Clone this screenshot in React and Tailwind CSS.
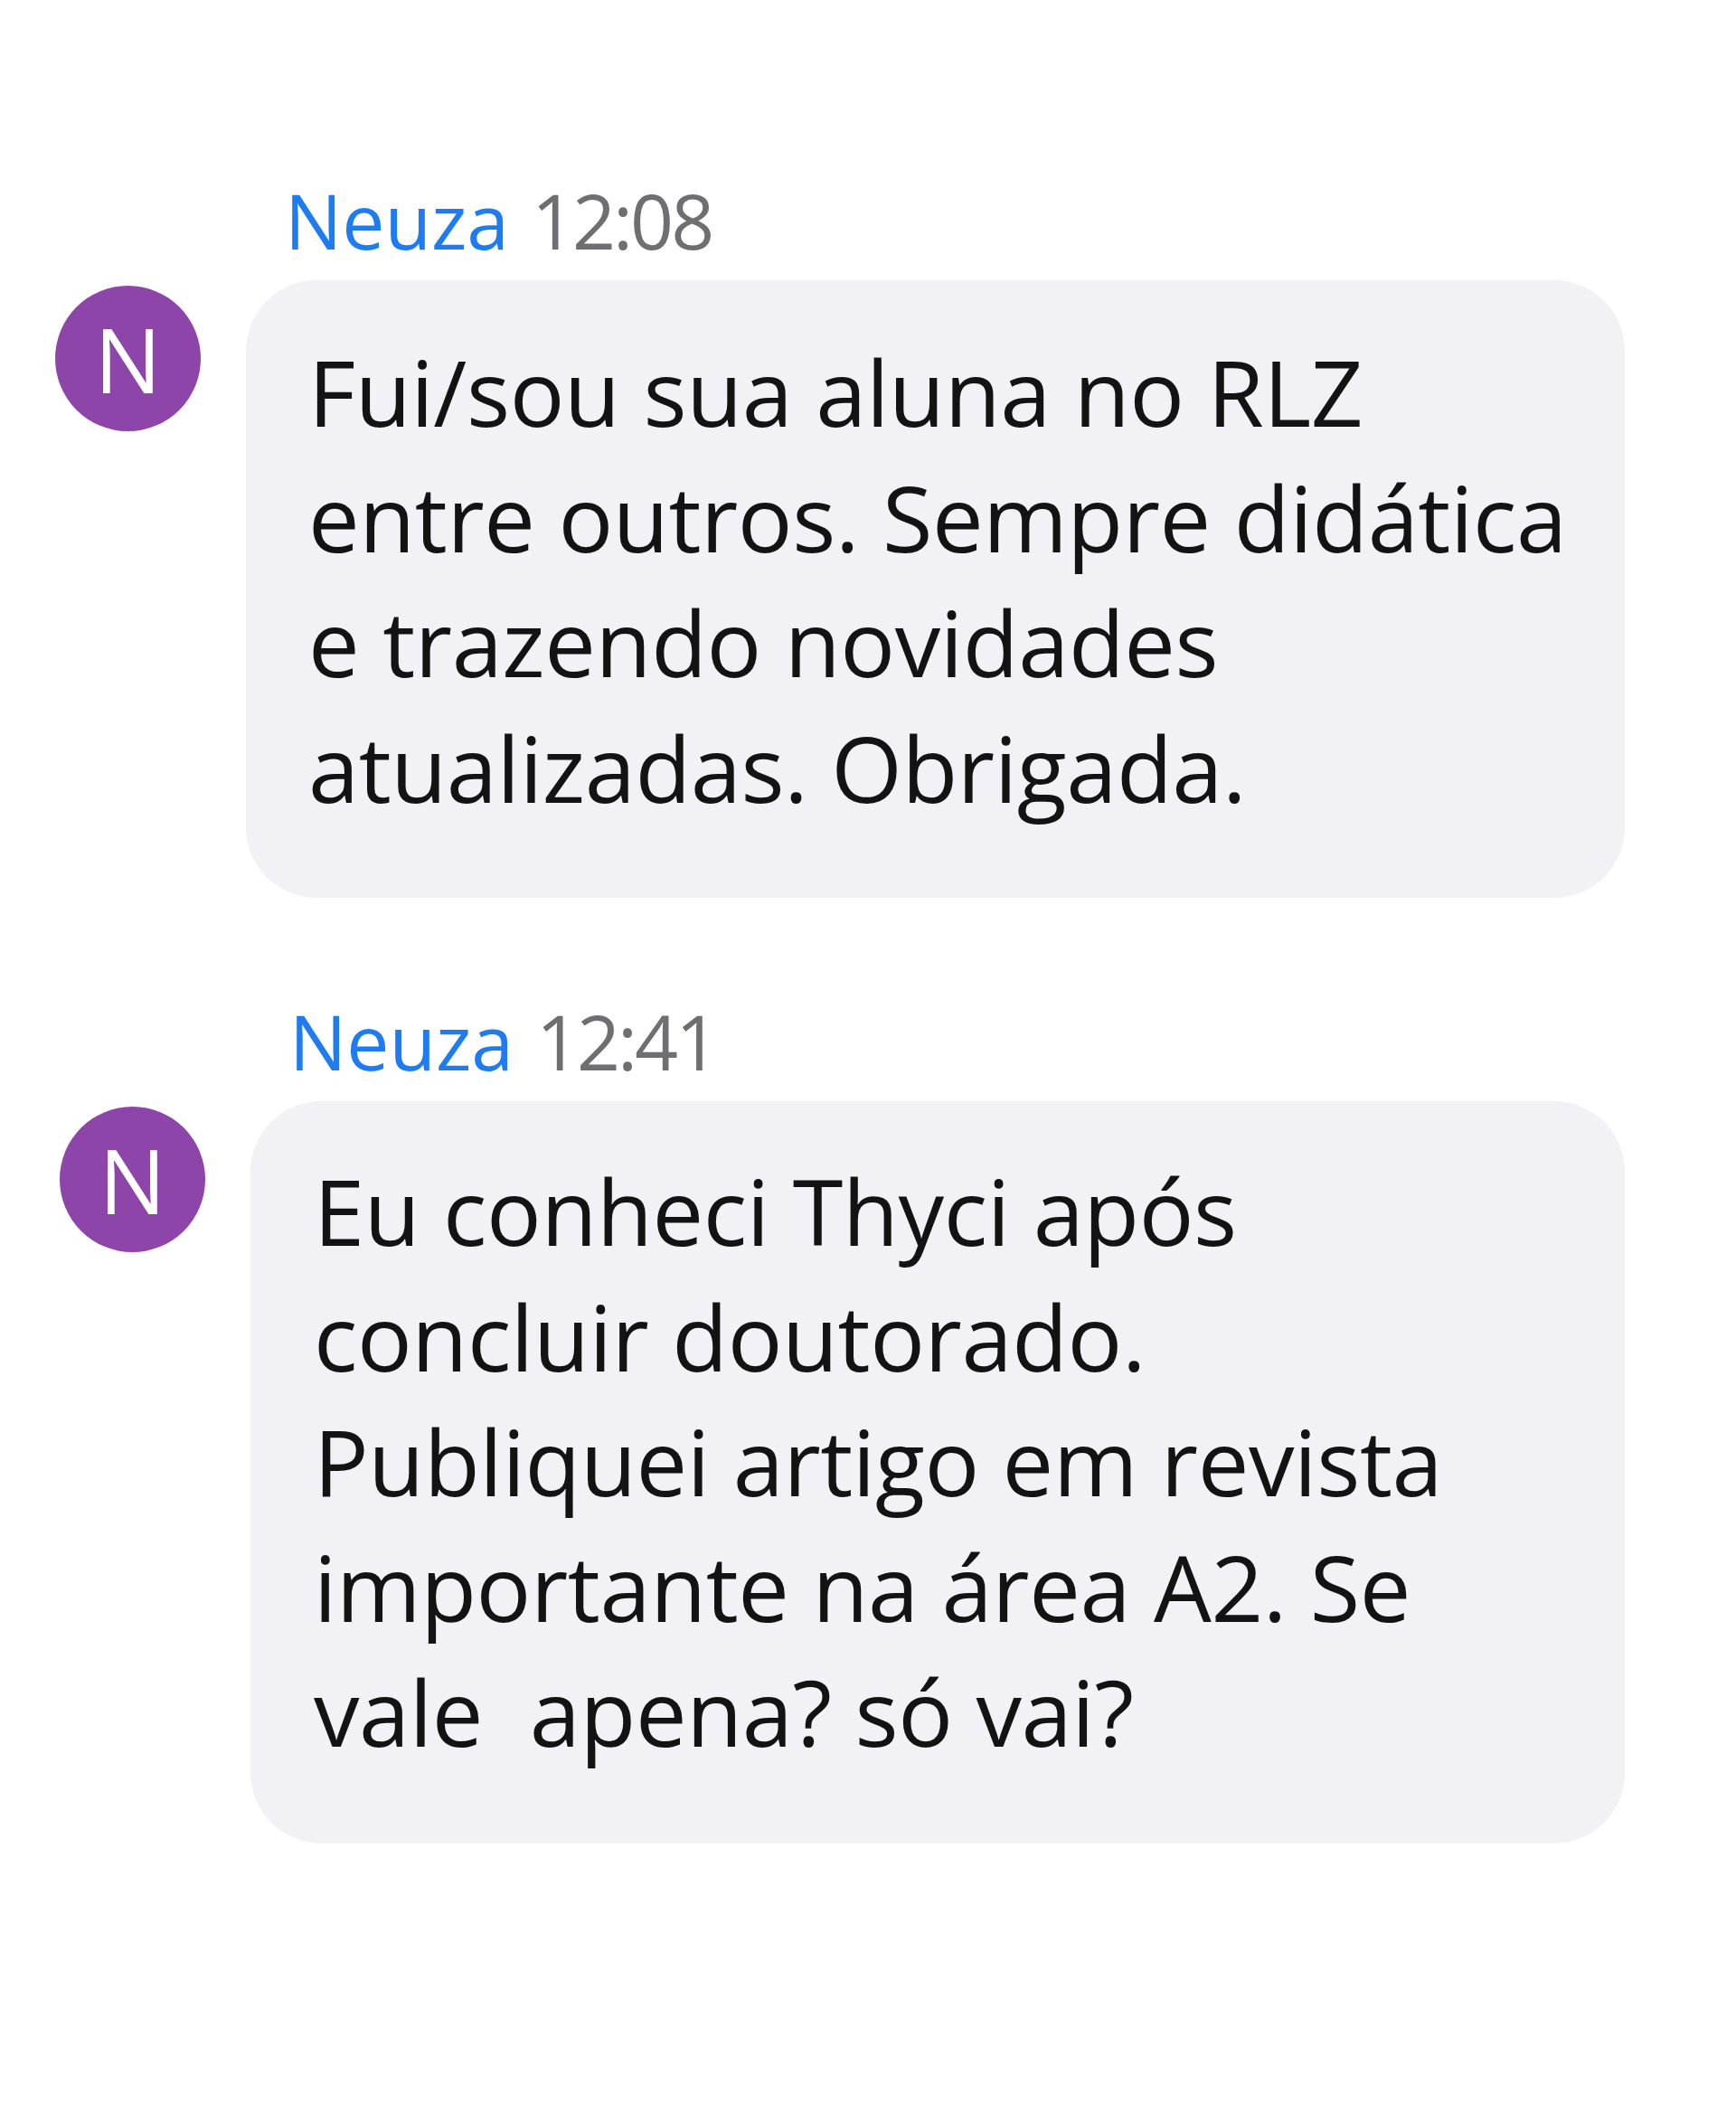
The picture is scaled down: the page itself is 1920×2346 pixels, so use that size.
import React from "react";

const messages = [
  {
    id: 1,
    name: "Neuza",
    time: "12:08",
    lines: [
      "Fui/sou sua aluna no RLZ",
      "entre outros. Sempre didática",
      "e trazendo novidades",
      "atualizadas. Obrigada.",
    ],
  },
  {
    id: 2,
    name: "Neuza",
    time: "12:41",
    lines: [
      "Eu conheci Thyci após",
      "concluir doutorado.",
      "Publiquei artigo em revista",
      "importante na área A2. Se",
      "vale\u00a0\u00a0apena? só vai?",
    ],
  },
];

const Message = ({ msg, shifted }) => (
  <div className={shifted ? "flex flex-col pl-[66px]" : "flex flex-col pl-[61px]"}>
    {/* name + time */}
    <div className="flex items-baseline pl-[254px] mb-[24px] text-[84px] leading-[84px] whitespace-nowrap">
      <span className="text-[#1f7cf0]">{msg.name}</span>
      <span className="ml-[25px] text-[#6f6f73] tracking-[-3px]">{msg.time}</span>
    </div>

    <div className="flex items-start">
      <div className="mt-[6px] w-[161px] h-[161px] shrink-0 rounded-full bg-[#8d45aa] flex items-center justify-center text-white text-[98px] leading-none">
        N
      </div>
      <div
        className={
          shifted
            ? "ml-[50px] w-[1520px] rounded-[78px] bg-[#f1f1f6] pl-[70px] pr-[40px] pt-[52px] pb-[76px]"
            : "ml-[50px] w-[1525px] rounded-[78px] bg-[#f1f1f6] pl-[69px] pr-[40px] pt-[54px] pb-[75px]"
        }
      >
        {msg.lines.map((line, idx) => (
          <p
            key={idx}
            className="text-[101px] leading-[138.5px] text-[#131313] whitespace-nowrap tracking-[-0.4px]"
          >
            {line}
          </p>
        ))}
      </div>
    </div>
  </div>
);

const App = () => {
  return (
    <div
      className="min-h-screen w-full bg-white pt-[202px]"
      style={{ fontFamily: '"Open Sans", "Noto Sans", sans-serif' }}
    >
      <Message msg={messages[0]} />
      <div className="h-[117px]" />
      <Message msg={messages[1]} shifted />
    </div>
  );
};

export default App;
